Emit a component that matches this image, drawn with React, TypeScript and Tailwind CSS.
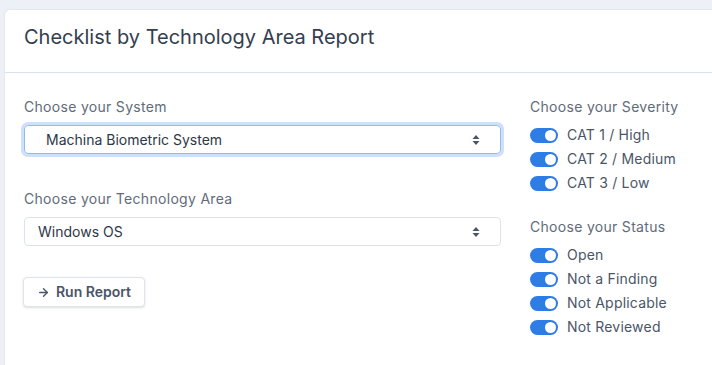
import { ArrowRight } from 'lucide-react';

const severities = ['CAT 1 / High', 'CAT 2 / Medium', 'CAT 3 / Low'];
const statuses = ['Open', 'Not a Finding', 'Not Applicable', 'Not Reviewed'];

function Toggle({ label }: { label: string }) {
  return (
    <div className="flex items-center h-6 gap-[9px]">
      <span className="relative w-[28px] h-[15px] rounded-full bg-[#2e7de6] shrink-0">
        <span className="absolute right-[2px] top-[2px] w-[11px] h-[11px] rounded-full bg-white" />
      </span>
      <span className="text-sm text-[#4a5568] tracking-[0.2px]">{label}</span>
    </div>
  );
}

function SelectChevron() {
  return (
    <svg width="8" height="12" viewBox="0 0 8 12" className="shrink-0">
      <path d="M4 1 L7.5 5 H0.5 Z" fill="#4a5568" />
      <path d="M4 11 L7.5 7 H0.5 Z" fill="#4a5568" />
    </svg>
  );
}

export default function App() {
  return (
    <div
      className="w-[712px] h-[365px] overflow-hidden bg-[#edf1f7] pt-[9px] pl-[4px]"
      style={{ fontFamily: 'Inter, "Liberation Sans", sans-serif' }}
    >
      <div className="w-[740px] h-[400px] bg-white rounded-tl-md border-l border-t border-[#e2e8f0]">
        <div className="pl-[19px] pt-[13px] pb-[21px] border-b border-[#d8e2ee]">
          <h1 className="text-[20px] leading-7 text-[#343e50] font-normal">
            Checklist by Technology Area Report
          </h1>
        </div>
        <div className="flex pl-[19px] pt-[24px]">
          <div className="w-[477px] flex flex-col">
            <label className="text-sm text-[#5f6b7a] tracking-[0.3px] leading-5">
              Choose your System
            </label>
            <div className="mt-2 h-[29px] flex items-center justify-between pl-[21px] pr-[20px] rounded border border-[#94b9ef] ring-[3px] ring-[#cfe0fa]">
              <span className="text-sm text-[#2d3748]">Machina Biometric System</span>
              <SelectChevron />
            </div>
            <label className="mt-[35px] text-sm text-[#5f6b7a] tracking-[0.3px] leading-5">
              Choose your Technology Area
            </label>
            <div className="mt-2 h-[29px] flex items-center justify-between pl-[13px] pr-[20px] rounded border border-[#dce3ec]">
              <span className="text-sm text-[#2d3748]">Windows OS</span>
              <SelectChevron />
            </div>
            <div className="mt-[31px]">
              <button className="h-[30px] w-[122px] -ml-px flex items-center justify-center gap-[6px] rounded border border-[#dfe4ea] bg-white shadow-sm text-sm font-semibold text-[#4a5568]">
                <ArrowRight size={13} strokeWidth={2.5} />
                Run Report
              </button>
            </div>
          </div>
          <div className="ml-[29px] flex flex-col">
            <label className="text-sm text-[#5f6b7a] tracking-[0.3px] leading-5">
              Choose your Severity
            </label>
            <div className="mt-[6px] flex flex-col">
              {severities.map((s) => (
                <Toggle key={s} label={s} />
              ))}
            </div>
            <label className="mt-[22px] text-sm text-[#5f6b7a] tracking-[0.3px] leading-5">
              Choose your Status
            </label>
            <div className="mt-[6px] flex flex-col">
              {statuses.map((s) => (
                <Toggle key={s} label={s} />
              ))}
            </div>
          </div>
        </div>
      </div>
    </div>
  );
}
